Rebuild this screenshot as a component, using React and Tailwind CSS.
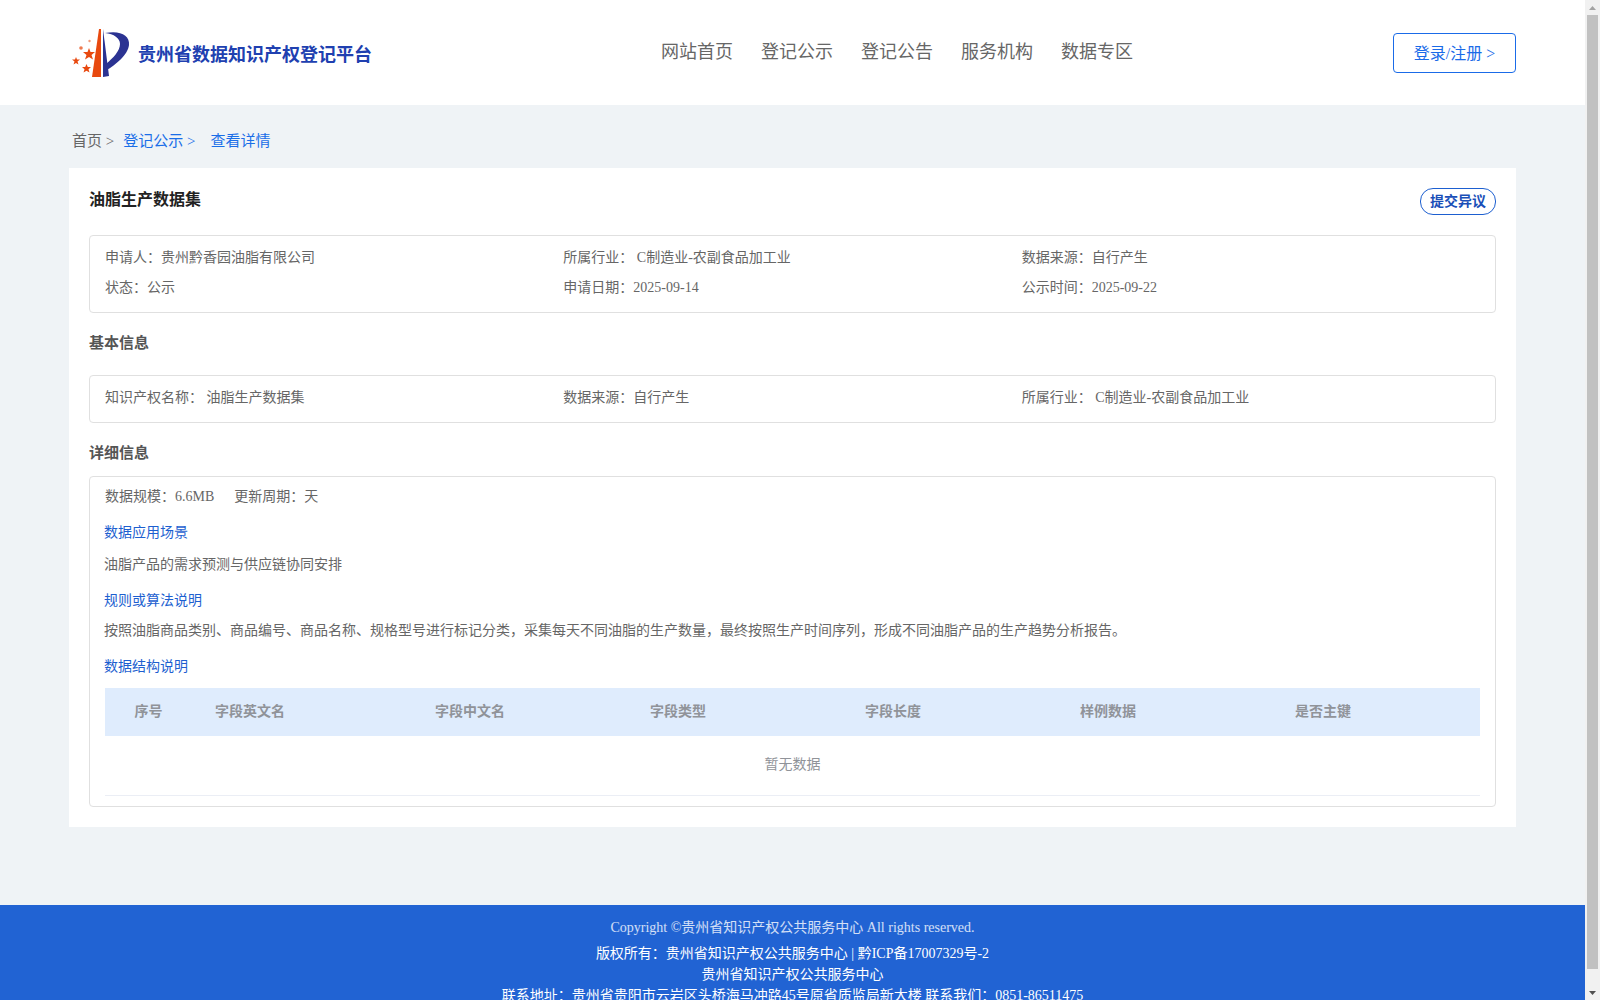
const navItems = ["网站首页", "登记公示", "登记公告", "服务机构", "数据专区"];
const columns = ["字段英文名", "字段中文名", "字段类型", "字段长度", "样例数据", "是否主键"];

const Logo = () => (
  <svg width="80" height="70" viewBox="0 0 80 70" className="shrink-0 mt-[4px]">
    <polygon points="32,57 39,9 41,9 41,57" fill="#e8490f" />
    <path d="M43 9 L49 56 L43 57 Z" fill="#2b3392" />
    <path d="M45 13 C60 10 70 15 69 25 C68 35 55 45 47 50 L46 44 C53 38 60 31 60 24 C60 18 54 14 45 13 Z" fill="#2b3392" />
    <polygon points="29,28 30.5,32 35,32 31.5,35 33,39.5 29,37 25,39.5 26.500,35 23,32 27.500,32" fill="#e8490f" />
    <polygon points="16,37 17,39.500 20,39.500 17.500,41.500 18.500,44.500 16,43 13.500,44.500 14.500,41.500 12,39.500 15,39.500" fill="#e8490f" />
    <polygon points="26.500,44 27.800,47 31,47 28.500,49.200 29.500,52.500 26.500,50.700 23.500,52.500 24.500,49.200 22,47 25.200,47" fill="#e8490f" />
    <circle cx="21" cy="28" r="1.800" fill="#ee7a50" />
    <circle cx="29.500" cy="21" r="1.200" fill="#f09a7a" />
  </svg>
);

const Field = ({ label, children }) => (
  <div className="leading-[30px] text-[#666]">
    {label}：{children}
  </div>
);

const Section = ({ children, className }) => (
  <h3 className={`text-[15px] font-bold text-[#555] flex items-center ${className}`}>{children}</h3>
);

const BlueLabel = ({ children, className }) => (
  <div className={`-ml-px leading-[22px] text-[#1d5fd0] ${className}`}>{children}</div>
);

const App = () => {
  return (
    <div className="flex h-screen overflow-hidden text-sm bg-[#eff3f6] font-['Liberation_Serif','Noto_Sans_CJK_SC',serif]">
      <div className="w-[1585px] shrink-0">
        {/* header */}
        <header className="h-[105px] bg-white flex items-center pl-[60px] pr-[69px]">
          <Logo />
          <h1 className="-ml-[2px] text-lg font-bold text-[#2040b0] mt-[5px]">贵州省数据知识产权登记平台</h1>
          <nav className="ml-[289px] mb-[2px] flex gap-[28px] text-lg text-[#666]">
            {navItems.map((item) => (
              <a key={item}>{item}</a>
            ))}
          </nav>
          <button className="ml-auto w-[123px] h-[40px] mt-[1px] pt-[2px] border border-[#1a6be8] rounded text-base text-[#1a6be8]">
            登录/注册 &gt;
          </button>
        </header>

        {/* breadcrumb */}
        <div className="h-[63px] pl-[72px] pt-[10px] flex items-center text-[15px] text-[#1a6ee8]">
          <span className="text-[#666]">首页 &gt;</span>
          <span className="ml-[9px]">登记公示 &gt;</span>
          <span className="ml-[15px]">查看详情</span>
        </div>

        <main className="mx-[69px] bg-white px-[20px] pt-[20px] pb-[20px]">
          <div className="flex justify-between items-start mb-[20px]">
            <h2 className="text-base font-bold leading-[24px] text-[#222]">油脂生产数据集</h2>
            <button className="w-[76px] h-[27px] border border-[#1d5fd0] rounded-[13px] font-bold text-[#1a4fb8]">提交异议</button>
          </div>

          <div className="border border-[#e0e0e0] rounded px-[15px] pt-[7px] pb-[9px] grid grid-cols-3">
            <Field label="申请人">贵州黔香园油脂有限公司</Field>
            <Field label="所属行业">&nbsp;C制造业-农副食品加工业</Field>
            <Field label="数据来源">自行产生</Field>
            <Field label="状态">公示</Field>
            <Field label="申请日期">2025-09-14</Field>
            <Field label="公示时间">2025-09-22</Field>
          </div>

          <Section className="h-[62px]">基本信息</Section>

          <div className="border border-[#e0e0e0] rounded pl-[15px] pr-[15px] pb-[3px] h-[48px] grid grid-cols-3 items-center">
            <Field label="知识产权名称">&nbsp;油脂生产数据集</Field>
            <Field label="数据来源">自行产生</Field>
            <Field label="所属行业">&nbsp;C制造业-农副食品加工业</Field>
          </div>

          <Section className="h-[53px] pt-[9px]">详细信息</Section>

          <div className="border border-[#e0e0e0] rounded px-[15px] pt-[9px] pb-[10px] text-[#666]">
            <div className="flex gap-[20px] leading-[22px]">
              <span>数据规模：6.6MB</span>
              <span>更新周期：天</span>
            </div>
            <BlueLabel className="mt-[14px]">数据应用场景</BlueLabel>
            <p className="-ml-px mt-[10px] leading-[22px]">油脂产品的需求预测与供应链协同安排</p>
            <BlueLabel className="mt-[14px]">规则或算法说明</BlueLabel>
            <p className="-ml-px mt-[8px] leading-[22px]">
              按照油脂商品类别、商品编号、商品名称、规格型号进行标记分类，采集每天不同油脂的生产数量，最终按照生产时间序列，形成不同油脂产品的生产趋势分析报告。
            </p>
            <BlueLabel className="mt-[14px]">数据结构说明</BlueLabel>
            <div className="mt-[10px] h-[48px] bg-[#dfecfd] grid grid-cols-[87px_220px_215px_215px_215px_215px_1fr] items-center font-bold text-[#909399]">
              <div className="text-center">序号</div>
              {columns.map((c) => (
                <div key={c} className="pl-[23px]">{c}</div>
              ))}
            </div>
            <div className="h-[60px] pb-[2px] border-b border-[#ebeef5] flex items-center justify-center text-[#909399]">暂无数据</div>
          </div>
        </main>

        {/* footer */}
        <footer className="mt-[78px] bg-[#2163d3] pt-[12px] text-center text-white leading-[21px]">
          <div className="text-white/80 mb-[5px]">Copyright ©贵州省知识产权公共服务中心 All rights reserved.</div>
          <div>版权所有：贵州省知识产权公共服务中心 | 黔ICP备17007329号-2</div>
          <div>贵州省知识产权公共服务中心</div>
          <div>联系地址：贵州省贵阳市云岩区头桥海马冲路45号原省质监局新大楼 联系我们：0851-86511475</div>
        </footer>
      </div>

      {/* scrollbar */}
      <div className="w-[15px] shrink-0 bg-[#f1f1f1] flex flex-col">
        <div className="h-[15px] flex items-center justify-center">
          <svg width="7" height="4" viewBox="0 0 7 4"><polygon points="3.500,0 7,4 0,4" fill="#a3a3a3" /></svg>
        </div>
        <div className="h-[954px] w-[11px] ml-[2px] bg-[#c1c1c1]"></div>
        <div className="mt-auto h-[15px] flex items-center justify-center">
          <svg width="7" height="4" viewBox="0 0 7 4"><polygon points="0,0 7,0 3.500,4" fill="#505050" /></svg>
        </div>
      </div>
    </div>
  );
};

export default App;
